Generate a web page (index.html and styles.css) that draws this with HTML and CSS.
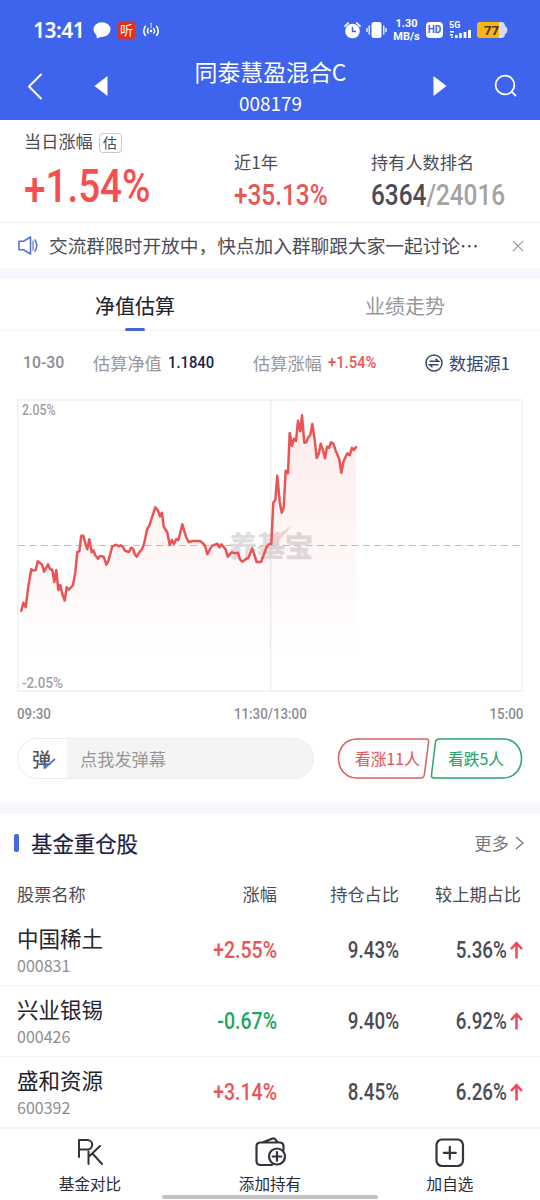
FILE: index.html
```html
<!DOCTYPE html>
<html lang="zh-CN">
<head>
  <meta charset="UTF-8">
  <meta name="viewport" content="width=device-width, initial-scale=1">
  <title>同泰慧盈混合C</title>
  <link rel="stylesheet" href="styles.css">
</head>
<body>
  <header class="header">
    <div class="status">
      <div class="status-left">
        <span class="clock">13:41</span>
        <svg class="chat" width="18" height="17" viewBox="0 0 18 17"><ellipse cx="9" cy="7.6" rx="8.5" ry="7.4" fill="#fff"/><path d="M3 11l1 5.6 6-2.6z" fill="#fff"/></svg>
        <span class="ting">听</span>
        <svg width="18" height="16" viewBox="0 0 18 16" fill="none" stroke="#fff" stroke-width="1.5" stroke-linecap="round"><path d="M3.4 4.3q-3.2 4.6 0 9.2M6.2 6.6q-1.5 2.3 0 4.6M14.6 4.3q3.2 4.6 0 9.2M11.8 6.6q1.5 2.3 0 4.6"/><path d="M8.3 1.8L9.2 1v5" stroke-width=".8"/><circle cx="9" cy="9" r="1.2" fill="#fff" stroke="none"/></svg>
      </div>
      <div class="status-right">
        <svg width="17" height="17" viewBox="0 0 17 17"><circle cx="8.5" cy="9" r="7.3" fill="#fff"/><path d="M1 4.2L4.2 1M16 4.2L12.8 1" stroke="#fff" stroke-width="1.7" stroke-linecap="round"/><path d="M8.5 5v4.5H12" fill="none" stroke="#3e64ee" stroke-width="1.5"/></svg>
        <svg class="vibrate" width="21" height="18" viewBox="0 0 21 18"><rect x="5.5" y="1" width="10" height="16" rx="2.5" fill="#fff"/><path d="M3.2 5v8M1 7.5v3M17.8 5v8M20 7.5v3" stroke="#fff" stroke-width="1.3" stroke-linecap="round"/></svg>
        <div class="speed"><span>1.30</span><span>MB/s</span></div>
        <span class="hd">HD</span>
        <svg class="signal" width="23" height="20" viewBox="0 -2 23 20"><text x="0" y="6" class="signal-text">5G</text><g fill="#fff"><path d="M1 9h4v1.5H1zM1 12h3v1.5H1zM2 14.5h2V16H2z"/><rect x="6" y="13" width="2.6" height="3"/><rect x="10.2" y="11" width="2.6" height="5"/><rect x="14.6" y="10" width="2.8" height="6"/><rect x="19" y="8" width="3" height="8"/></g></svg>
        <svg class="battery" width="31" height="16" viewBox="0 0 31 16"><path d="M4 0h20q4 0 4 4 2.5 1 2.5 4T28 12q0 4-4 4H4q-4 0-4-4V4q0-4 4-4z" fill="#d6dcfa"/><path d="M4 0h18v16H4q-4 0-4-4V4q0-4 4-4z" fill="#fab414"/><text x="7" y="12.6" class="battery-text">77</text></svg>
      </div>
    </div>
    <nav class="nav">
      <svg class="back" width="16" height="27" viewBox="0 0 16 27"><path d="M14 1.5L2 13.5l12 12" fill="none" stroke="#fff" stroke-width="2" stroke-linecap="round" stroke-linejoin="round"/></svg>
      <svg class="prev" width="14" height="20" viewBox="0 0 14 20"><path d="M13.5 0v20L.5 10z" fill="#fff"/></svg>
      <div class="fund">
        <h1>同泰慧盈混合C</h1>
        <p>008179</p>
      </div>
      <svg class="next" width="14" height="20" viewBox="0 0 14 20"><path d="M.5 0v20l13-10z" fill="#fff"/></svg>
      <svg class="search" width="24" height="24" viewBox="0 0 24 24" fill="none" stroke="#fff" stroke-width="1.8" stroke-linecap="round"><circle cx="11" cy="11" r="9.4"/><path d="M17.8 17.8l3.7 3.7"/></svg>
    </nav>
  </header>

  <section class="summary">
    <div class="today">
      <div class="label">当日涨幅 <span class="tag">估</span></div>
      <div class="num big red"><span class="sign">+</span>1.54%</div>
    </div>
    <div class="year">
      <div class="label">近1年</div>
      <div class="num mid red">+35.13%</div>
    </div>
    <div class="rank">
      <div class="label">持有人数排名</div>
      <div class="num mid">6364<span class="total">/24016</span></div>
    </div>
  </section>

  <div class="notice">
    <svg width="20" height="19" viewBox="0 0 20 19" fill="none" stroke="#5577cf" stroke-width="1.6" stroke-linejoin="round" stroke-linecap="round"><path d="M1 5.2h4.5L12.5 1v17l-7-4.2H1z"/><path d="M15 5v9" stroke-width="1.2"/><path d="M17 4q3.6 5.5 0 11"/></svg>
    <p>交流群限时开放中，快点加入群聊跟大家一起讨论…</p>
    <svg class="close" width="12" height="12" viewBox="0 0 12 12"><path d="M.8.8l10.4 10.4M11.2.8L.8 11.2" stroke="#999" stroke-width="1.2"/></svg>
  </div>

  <div class="gap"></div>

  <div class="tabs">
    <div class="tab active">净值估算</div>
    <div class="tab">业绩走势</div>
  </div>

  <div class="info">
    <span class="num date">10-30</span>
    <span class="info-label net">估算净值</span>
    <span class="num navy">1.1840</span>
    <span class="info-label rate">估算涨幅</span>
    <span class="num red">+1.54%</span>
    <span class="source">
      <svg width="18" height="18" viewBox="0 0 18 18" fill="none" stroke="#39466f" stroke-width="1.5"><circle cx="9" cy="9" r="8"/><path d="M4.5 7.3h9l-3-2.6M13.5 10.7h-9l3 2.6"/></svg>
      数据源1
    </span>
  </div>

  <div class="chart">
    <svg width="506" height="293" viewBox="17 399 506 293">
      <defs>
        <linearGradient id="area" gradientUnits="userSpaceOnUse" x1="0" y1="415" x2="0" y2="660">
          <stop offset="0" stop-color="#f5504f" stop-opacity=".11"/>
          <stop offset=".55" stop-color="#f5504f" stop-opacity=".05"/>
          <stop offset="1" stop-color="#f5504f" stop-opacity="0"/>
        </linearGradient>
      </defs>
      <rect x="18" y="400" width="504" height="291" fill="none" stroke="#f0f0f2" stroke-width="1.6"/>
      <path d="M270.7 400v291" stroke="#ececf1" stroke-width="1.3"/>
      <path d="M18 545.5h504" stroke="#bdbdbd" stroke-width="1" stroke-dasharray="7 4.5"/>
      <g class="watermark">
        <text x="229" y="557">养基宝</text>
        <path d="M256 553l17-15 20-13-14 15z" fill="#fbccd0"/>
      </g>
      <path id="fill" fill="url(#area)"/>
      <path id="line" fill="none" stroke="#ea5455" stroke-width="2.5" stroke-linejoin="round" stroke-linecap="round"/>
    </svg>
    <span class="num pct axis top">2.05%</span>
    <span class="num axis bottom">-2.05%</span>
  </div>
  <div class="times">
    <span class="num">09:30</span>
    <span class="num">11:30/13:00</span>
    <span class="num">15:00</span>
  </div>

  <div class="actions">
    <div class="danmu">
      <div class="danmu-switch">弹<svg width="16" height="12" viewBox="0 0 16 12"><path d="M1 5l5 5 9-8" fill="none" stroke="#4b6fe0" stroke-width="1.7"/></svg></div>
      <div class="danmu-input">点我发弹幕</div>
    </div>
    <div class="vote up">
      <svg width="93" height="42" viewBox="0 0 93 42"><path d="M20 1H89q3 0 2.6 3l-4.3 33q-.5 3-3.5 3H20C8 40 1.5 30.5 1.5 20.5S8 1 20 1z" fill="#fffdfd" stroke="#d9605f" stroke-width="1.5"/></svg>
      <span>看涨11人</span>
    </div>
    <div class="vote down">
      <svg width="93" height="42" viewBox="0 0 93 42"><path d="M73 1H9q-3 0-3.5 3l-4 33q-.4 3 2.6 3H73C85 40 91.5 30.5 91.5 20.5S85 1 73 1z" fill="#fdfffe" stroke="#2aa56c" stroke-width="1.5"/></svg>
      <span>看跌5人</span>
    </div>
  </div>

  <div class="gap"></div>

  <section class="stocks">
    <div class="stocks-title">
      <h2>基金重仓股</h2>
      <span class="more">更多 <svg width="9" height="14" viewBox="0 0 9 14"><path d="M1 1l7 6-7 6" fill="none" stroke="#777" stroke-width="1.4"/></svg></span>
    </div>
    <div class="row head">
      <span>股票名称</span><span>涨幅</span><span>持仓占比</span><span>较上期占比</span>
    </div>
    <div class="row">
      <div class="name">中国稀土<small>000831</small></div>
      <div class="num change red">+2.55%</div>
      <div class="num pct">9.43%</div>
      <div class="diff"><span class="num pct">5.36%</span><svg width="13" height="18" viewBox="0 0 13 18"><path d="M6.5 17.5V2M1 8l5.5-6L12 8" fill="none" stroke="#ee4856" stroke-width="2.5"/></svg></div>
    </div>
    <div class="row">
      <div class="name">兴业银锡<small>000426</small></div>
      <div class="num change green">-0.67%</div>
      <div class="num pct">9.40%</div>
      <div class="diff"><span class="num pct">6.92%</span><svg width="13" height="18" viewBox="0 0 13 18"><path d="M6.5 17.5V2M1 8l5.5-6L12 8" fill="none" stroke="#ee4856" stroke-width="2.5"/></svg></div>
    </div>
    <div class="row">
      <div class="name">盛和资源<small>600392</small></div>
      <div class="num change red">+3.14%</div>
      <div class="num pct">8.45%</div>
      <div class="diff"><span class="num pct">6.26%</span><svg width="13" height="18" viewBox="0 0 13 18"><path d="M6.5 17.5V2M1 8l5.5-6L12 8" fill="none" stroke="#ee4856" stroke-width="2.5"/></svg></div>
    </div>
  </section>

  <footer class="footer">
    <div class="footer-item">
      <svg width="32" height="32" viewBox="0 0 32 32" fill="none" stroke="#33333b" stroke-width="2" stroke-linecap="round" stroke-linejoin="round"><path d="M5 20V3h8.5a4.7 4.7 0 010 9.4H5M14.5 14.5V27M26 9L15 19.5M18.5 16.5L28 27"/></svg>
      <span>基金对比</span>
    </div>
    <div class="footer-item">
      <svg width="32" height="32" viewBox="0 0 32 32" fill="none" stroke="#33333b" stroke-width="2.2" stroke-linecap="round" stroke-linejoin="round"><path d="M18 28H6.5q-4 0-4-4V9.500q0-4 4-4h19q4 0 4 4V13M9.500 5l8.500-3.300q2.500-1 4 1.500L23.500 5"/><circle cx="23" cy="19.500" r="8" fill="#fff"/><path d="M23 15.200v8.600M18.700 19.500h8.600"/></svg>
      <span>添加持有</span>
    </div>
    <div class="footer-item">
      <svg width="32" height="32" viewBox="0 0 32 32" fill="none" stroke="#33333b" stroke-width="2.2" stroke-linecap="round"><rect x="2.5" y="2.5" width="26.5" height="26.5" rx="5.5"/><path d="M15.800 9.800v12M9.800 15.800h12"/></svg>
      <span>加自选</span>
    </div>
    <div class="home-bar"></div>
  </footer>

  <script src="chart.js"></script>
</body>
</html>
```

FILE: styles.css
```css
* {
  box-sizing: border-box;
}
body {
  margin: 0;
  width: 540px;
  height: 1200px;
  overflow: hidden;
  background: #fff;
  color: #4c4c55;
  font-family: "Noto Sans CJK SC", sans-serif;
  font-size: 17.2px;
  line-height: 1;
}
h1, h2, p {
  margin: 0;
  font-weight: 400;
}
svg {
  display: block;
  flex: none;
}

/* narrow figures */
.num {
  font-family: Roboto, sans-serif;
  font-weight: 500;
  white-space: nowrap;
  transform: scaleX(.86);
  transform-origin: left center;
}
.num.pct {
  transform: scaleX(.8);
}
.red, .num.red { color: #e85657; }
.green, .num.green { color: #1fa463; }

/* header */
.header {
  height: 120px;
  background: #3e64ee;
  color: #fff;
}
.status {
  height: 60px;
  padding: 0 32px 0 33px;
  display: flex;
  justify-content: space-between;
  align-items: center;
}
.status-left, .status-right {
  display: flex;
  align-items: center;
}
.clock {
  font-family: "Noto Sans", sans-serif;
  font-weight: 600;
  font-size: 21px;
  letter-spacing: -.5px;
  width: 60px;
  white-space: nowrap;
}
.ting {
  width: 17px;
  height: 17px;
  margin: 0 7px;
  border-radius: 2px;
  background: #e0301e;
  font-size: 13px;
  line-height: 16px;
  text-align: center;
}
.vibrate {
  margin: 0 6px 0 5px;
}
.speed {
  display: flex;
  flex-direction: column;
  align-items: center;
  width: 27px;
  font-family: Roboto, sans-serif;
  font-size: 11px;
  font-weight: 700;
  line-height: 13px;
}
.hd {
  width: 17px;
  height: 16px;
  margin: 0 6px;
  border-radius: 4px;
  background: #fff;
  color: #3e64ee;
  font: 700 10px/16px Roboto, sans-serif;
  text-align: center;
}
.signal-text {
  font: 700 9px Roboto, sans-serif;
  fill: #fff;
}
.battery {
  margin-left: 5px;
}
.battery-text {
  font: 700 13px "Open Sans", sans-serif;
  fill: #463a1c;
}
.nav {
  display: flex;
  align-items: center;
  height: 52px;
  padding: 0 22px 0 27px;
}
.prev {
  margin-left: 51px;
}
.fund {
  flex: 1;
  padding-top: 1px;
  text-align: center;
}
.fund h1 {
  font-size: 22.9px;
}
.fund p {
  margin-top: 11px;
  font-size: 18.9px;
}
.search {
  margin-left: 47px;
}

/* summary */
.summary {
  display: flex;
  height: 103px;
  border-bottom: 1px solid #efeff1;
}
.today {
  width: 234px;
  padding: 12px 0 0 24px;
}
.year {
  width: 137px;
}
.year, .rank {
  padding-top: 33px;
}
.tag {
  display: inline-block;
  width: 23px;
  height: 20px;
  margin-left: 2px;
  border: 1px solid #c9c9cf;
  border-radius: 4px;
  font-size: 14px;
  line-height: 17px;
  text-align: center;
  vertical-align: middle;
}
.num.big {
  margin-top: 10px;
  font-size: 46px;
  transform: scaleX(.84);
  color: #f5504f;
}
.sign {
  position: relative;
  top: 3px;
}
.num.mid {
  margin-top: 11px;
  font-size: 29px;
  transform: scaleX(.84);
}
.total {
  color: #a3a3a5;
}

/* notice */
.notice {
  display: flex;
  align-items: center;
  height: 45px;
  padding: 0 16px 0 18px;
  font-size: 18.7px;
}
.notice p {
  flex: 1;
  margin-left: 11px;
  white-space: nowrap;
}
.gap {
  height: 11px;
  background: #f6f7fc;
}

/* tabs */
.tabs {
  display: flex;
  height: 52px;
  border-bottom: 1px solid #f3f3f5;
}
.tab {
  position: relative;
  flex: 1;
  padding-top: 17px;
  font-size: 20px;
  text-align: center;
  color: #97979c;
}
.tab.active {
  color: #23232d;
  -webkit-text-stroke: .15px;
}
.tab.active::after {
  content: "";
  position: absolute;
  left: 125px;
  bottom: -1px;
  width: 20px;
  height: 3px;
  border-radius: 2px;
  background: #4468d2;
}

.info {
  display: flex;
  align-items: center;
  height: 64px;
  padding-left: 23px;
}
.info .date {
  width: 70px;
  transform: scaleX(.92);
  color: #8b8b90;
}
.info-label {
  width: 75px;
  color: #97979c;
}
.info .navy {
  width: 85px;
  color: #1d1d48;
}
.info .red {
  width: 97px;
}
.source {
  display: flex;
  gap: 6px;
  align-items: center;
  color: #39466f;
}

/* chart */
.chart {
  position: relative;
  margin: 4px 17px 0;
  height: 293px;
}
.watermark {
  opacity: .85;
}
.watermark text {
  font-size: 28px;
  font-weight: 700;
  fill: #d9d7da;
  stroke: #d9d7da;
  stroke-width: .6px;
}
.axis {
  position: absolute;
  left: 5px;
  font-size: 15.5px;
  color: #a0a0a5;
}
.axis.top { top: 4px; }
.axis.bottom { bottom: 1px; }
.times {
  display: flex;
  justify-content: space-between;
  height: 46px;
  padding: 15px 17px 0;
  font-size: 15.5px;
  color: #8c8c92;
}
.times .num:nth-child(2) {
  transform-origin: center;
}
.times .num:last-child {
  transform-origin: right center;
}

/* danmu + vote */
.actions {
  display: flex;
  height: 65px;
  padding: 0 17px;
}
.danmu {
  display: flex;
  width: 298px;
  height: 41px;
  margin-right: 23px;
  border: 1px solid #ececee;
  border-radius: 21px;
  background: #f4f4f4;
  overflow: hidden;
}
.danmu-switch {
  position: relative;
  width: 49px;
  background: #fff;
  padding: 10px 0 0 14px;
  font-size: 19px;
  font-weight: 500;
  color: #55555a;
}
.danmu-switch svg {
  position: absolute;
  left: 22px;
  top: 18px;
}
.danmu-input {
  padding: 11px 0 0 13px;
  color: #97979a;
}
.vote {
  position: relative;
  width: 93px;
  height: 42px;
  font-size: 15.8px;
  -webkit-text-stroke: .15px;
}
.vote span {
  position: absolute;
  left: 18px;
  top: 13px;
  white-space: nowrap;
}
.vote.up { color: #d9605f; }
.vote.down { color: #2aa56c; }

/* stocks */
.stocks {
  height: 313px;
}
.stocks-title {
  display: flex;
  justify-content: space-between;
  align-items: center;
  height: 58px;
  padding: 0 16px 0 14px;
}
.stocks-title h2 {
  display: flex;
  align-items: center;
  font-size: 21.4px;
  color: #1d1d40;
  -webkit-text-stroke: .2px;
}
.stocks-title h2::before {
  content: "";
  width: 5px;
  height: 18px;
  margin-right: 12px;
  border-radius: 2px;
  background: #4468e0;
}
.more {
  display: flex;
  gap: 6px;
  align-items: center;
  color: #77777c;
}
.row {
  display: grid;
  grid-template-columns: 140px 120px 122px 124px;
  align-items: center;
  height: 71px;
  padding-left: 17px;
  border-bottom: 1px solid #f5f5f7;
  text-align: right;
}
.row:last-child {
  height: 70px;
  border-bottom: 0;
}
.row.head {
  height: 43px;
  border-bottom: 0;
  grid-template-columns: 140px 120px 122px 122px;
}
.row > :first-child {
  text-align: left;
}
.row .num {
  padding-top: 2px;
  font-size: 23.5px;
  transform-origin: right center;
}
.row .change {
  transform: scaleX(.83);
}
.name {
  font-size: 21.5px;
  color: #23232d;
}
.name small {
  display: block;
  margin-top: 8px;
  font-size: 16px;
  color: #8e8e93;
}
.diff {
  display: flex;
  justify-content: flex-end;
  align-items: center;
  gap: 3px;
}

/* footer */
.footer {
  position: relative;
  display: flex;
  height: 73px;
  border-top: 2px solid #f3f3f4;
}
.footer-item {
  flex: 1;
  display: flex;
  flex-direction: column;
  align-items: center;
  padding-top: 8px;
  font-size: 15.6px;
  color: #2b2b33;
}
.footer-item span {
  margin-top: 7px;
}
.home-bar {
  position: absolute;
  left: 162px;
  bottom: 1px;
  width: 216px;
  height: 4px;
  border-radius: 2px;
  background: #c2c2c4;
}
```

FILE: chart.js
```js
const points = [
  [21.3,610.7],[23.3,602.7],[25.7,607.3],[28.3,586.7],[31.3,569.3],[33.3,570.5],[35.7,570],[37.7,561.3],
  [42,564.5],[44,571.7],[48,564.3],[50,569],[52.3,570],[54.3,582],[56.3,570],[58.3,590],[60.3,585],
  [62.3,594],[64.7,600.5],[66.7,587.3],[69,589.7],[73,585],[75.3,572.7],[77.3,552],[79.3,551.3],
  [81.3,535.7],[83.3,535.7],[85.3,543.3],[87.3,549.3],[89.3,539.3],[91.7,552.3],[93.3,550.3],[95.3,555.3],
  [98,558.7],[100,556],[103.7,556.7],[106.3,564.7],[108.3,561.3],[112.3,546.3],[116.3,544.7],[118.7,546.3],
  [120.7,545.3],[122.7,546.7],[125,550.7],[129,552],[131,547.7],[133,548.7],[134.7,554],[136.7,556.7],
  [139.3,552.3],[141.7,549.7],[144,544],[147.3,528.7],[149.3,525.7],[155.3,507.3],[157.7,510],[160,516.3],
  [162,512.7],[163.7,526.7],[167.3,532.3],[169.7,545],[172,540],[174,544],[176.3,539],[178.3,540.3],
  [182.3,524.3],[186,536.7],[188.7,542],[193.3,541],[200,541],[202.3,542.7],[205,545.7],[207.3,554.3],
  [211.7,546],[217.3,543.7],[219.3,547.3],[221.3,544.3],[225.7,549.3],[227.7,556.7],[231.7,552.3],
  [234.7,553.3],[238,552.7],[240,559.3],[242.3,561.7],[246.3,558.7],[248.3,558],[252.3,548.3],[256.7,562],
  [261,562],[266.7,546.7],[269.3,544],[271.3,544],[273.3,502.7],[275.3,500],[277.3,475.7],[279.7,501.7],
  [281.7,512.7],[283.7,507.7],[285.7,470.7],[288,473.3],[289.7,433],[292,446],[294,438.7],[296,441],
  [298,420.7],[300.3,431.3],[302,415.3],[304.3,442.7],[306.3,442.3],[308.3,437.3],[310.3,435],[312.3,424],
  [314.7,440],[316.7,458],[318.7,454],[320.7,443.7],[322.7,449.3],[325,458.3],[327,446.7],[329,448],
  [331,442.3],[333.3,443.3],[335.7,450.7],[339.3,459.3],[341.3,472.7],[343.7,461],[347.3,453.3],
  [349.7,455.3],[352,447.7],[354,450],[356,447]
];
const d = "M" + points.map(p => p.join(" ")).join("L");
document.getElementById("line").setAttribute("d", d);
document.getElementById("fill").setAttribute("d", d + "V691H21.3Z");
```
